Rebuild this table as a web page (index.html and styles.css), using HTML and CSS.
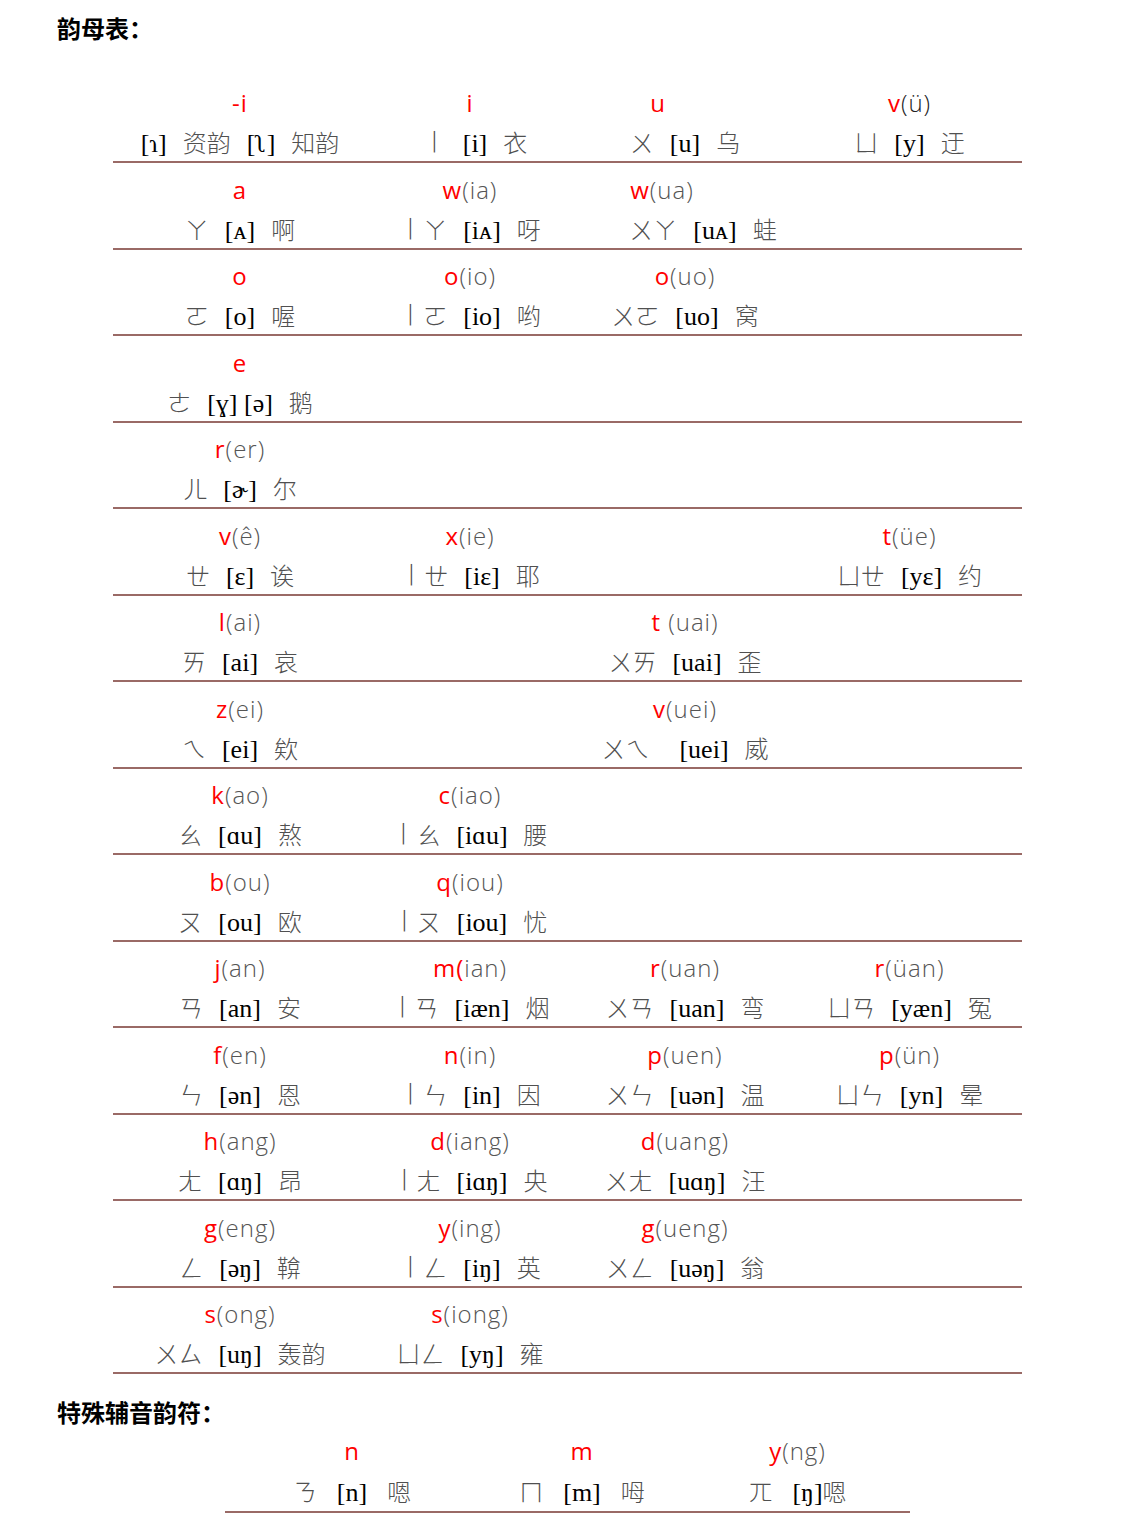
FILE: index.html
```html
<!DOCTYPE html>
<html lang="zh">
<head>
<meta charset="utf-8">
<title>韵母表</title>
<link rel="stylesheet" href="styles.css">
</head>
<body>
<div class="page">
  <h2 class="title">韵母表：</h2>

  <div class="table main">
    <div class="row">
      <div class="cell"><div class="py"><b>-i</b></div><div class="zy"><span class="ipa">[ɿ]</span><span class="hz">资韵</span><span class="ipa">[ʅ]</span><span class="hz">知韵</span></div></div>
      <div class="cell"><div class="py"><b>i</b></div><div class="zy sh-r"><span class="hz"><span class="yi">ㄧ</span></span><span class="ipa">[i]</span><span class="hz">衣</span></div></div>
      <div class="cell"><div class="py sh-u"><b>u</b></div><div class="zy"><span class="hz">ㄨ</span><span class="ipa">[u]</span><span class="hz">乌</span></div></div>
      <div class="cell"><div class="py"><b>v</b><span class="dk">(ü)</span></div><div class="zy"><span class="hz">ㄩ</span><span class="ipa">[y]</span><span class="hz">迂</span></div></div>
    </div>
    <div class="row">
      <div class="cell"><div class="py"><b>a</b></div><div class="zy"><span class="hz">ㄚ</span><span class="ipa">[ᴀ]</span><span class="hz">啊</span></div></div>
      <div class="cell"><div class="py"><b>w</b>(ia)</div><div class="zy"><span class="hz"><span class="yi">ㄧ</span>ㄚ</span><span class="ipa">[iᴀ]</span><span class="hz">呀</span></div></div>
      <div class="cell"><div class="py sh-ua"><b>w</b>(ua)</div><div class="zy sh-uaz"><span class="hz">ㄨㄚ</span><span class="ipa">[uᴀ]</span><span class="hz">蛙</span></div></div>
      <div class="cell"></div>
    </div>
    <div class="row">
      <div class="cell"><div class="py"><b>o</b></div><div class="zy"><span class="hz">ㄛ</span><span class="ipa">[o]</span><span class="hz">喔</span></div></div>
      <div class="cell"><div class="py"><b>o</b>(io)</div><div class="zy"><span class="hz"><span class="yi">ㄧ</span>ㄛ</span><span class="ipa">[io]</span><span class="hz">哟</span></div></div>
      <div class="cell"><div class="py"><b>o</b>(uo)</div><div class="zy"><span class="hz">ㄨㄛ</span><span class="ipa">[uo]</span><span class="hz">窝</span></div></div>
      <div class="cell"></div>
    </div>
    <div class="row">
      <div class="cell"><div class="py"><b>e</b></div><div class="zy"><span class="hz">ㄜ</span><span class="ipa">[ɣ] [ə]</span><span class="hz">鹅</span></div></div>
      <div class="cell"></div><div class="cell"></div><div class="cell"></div>
    </div>
    <div class="row">
      <div class="cell"><div class="py"><b>r</b>(er)</div><div class="zy"><span class="hz">ㄦ</span><span class="ipa">[ɚ]</span><span class="hz">尔</span></div></div>
      <div class="cell"></div><div class="cell"></div><div class="cell"></div>
    </div>
    <div class="row">
      <div class="cell"><div class="py"><b>v</b>(ê)</div><div class="zy"><span class="hz">ㄝ</span><span class="ipa">[ɛ]</span><span class="hz">诶</span></div></div>
      <div class="cell"><div class="py"><b>x</b>(ie)</div><div class="zy"><span class="hz"><span class="yi">ㄧ</span>ㄝ</span><span class="ipa">[iɛ]</span><span class="hz">耶</span></div></div>
      <div class="cell"></div>
      <div class="cell"><div class="py"><b>t</b>(üe)</div><div class="zy"><span class="hz">ㄩㄝ</span><span class="ipa">[yɛ]</span><span class="hz">约</span></div></div>
    </div>
    <div class="row">
      <div class="cell"><div class="py"><b>l</b>(ai)</div><div class="zy"><span class="hz">ㄞ</span><span class="ipa">[ai]</span><span class="hz">哀</span></div></div>
      <div class="cell"></div>
      <div class="cell"><div class="py"><b>t</b> (uai)</div><div class="zy"><span class="hz">ㄨㄞ</span><span class="ipa">[uai]</span><span class="hz">歪</span></div></div>
      <div class="cell"></div>
    </div>
    <div class="row">
      <div class="cell"><div class="py"><b>z</b>(ei)</div><div class="zy"><span class="hz">ㄟ</span><span class="ipa">[ei]</span><span class="hz">欸</span></div></div>
      <div class="cell"></div>
      <div class="cell"><div class="py"><b>v</b>(uei)</div><div class="zy"><span class="hz wide">ㄨㄟ</span><span class="ipa">[uei]</span><span class="hz">威</span></div></div>
      <div class="cell"></div>
    </div>
    <div class="row">
      <div class="cell"><div class="py"><b>k</b>(ao)</div><div class="zy"><span class="hz">ㄠ</span><span class="ipa">[ɑu]</span><span class="hz">熬</span></div></div>
      <div class="cell"><div class="py"><b>c</b>(iao)</div><div class="zy"><span class="hz"><span class="yi">ㄧ</span>ㄠ</span><span class="ipa">[iɑu]</span><span class="hz">腰</span></div></div>
      <div class="cell"></div><div class="cell"></div>
    </div>
    <div class="row">
      <div class="cell"><div class="py"><b>b</b>(ou)</div><div class="zy"><span class="hz">ㄡ</span><span class="ipa">[ou]</span><span class="hz">欧</span></div></div>
      <div class="cell"><div class="py"><b>q</b>(iou)</div><div class="zy"><span class="hz"><span class="yi">ㄧ</span>ㄡ</span><span class="ipa">[iou]</span><span class="hz">忧</span></div></div>
      <div class="cell"></div><div class="cell"></div>
    </div>
    <div class="row">
      <div class="cell"><div class="py"><b>j</b>(an)</div><div class="zy"><span class="hz">ㄢ</span><span class="ipa">[an]</span><span class="hz">安</span></div></div>
      <div class="cell"><div class="py"><b>m(</b>ian)</div><div class="zy"><span class="hz"><span class="yi">ㄧ</span>ㄢ</span><span class="ipa">[iæn]</span><span class="hz">烟</span></div></div>
      <div class="cell"><div class="py"><b>r</b>(uan)</div><div class="zy"><span class="hz">ㄨㄢ</span><span class="ipa">[uan]</span><span class="hz">弯</span></div></div>
      <div class="cell"><div class="py"><b>r</b>(üan)</div><div class="zy"><span class="hz">ㄩㄢ</span><span class="ipa">[yæn]</span><span class="hz">冤</span></div></div>
    </div>
    <div class="row">
      <div class="cell"><div class="py"><b>f</b>(en)</div><div class="zy"><span class="hz">ㄣ</span><span class="ipa">[ən]</span><span class="hz">恩</span></div></div>
      <div class="cell"><div class="py"><b>n</b>(in)</div><div class="zy"><span class="hz"><span class="yi">ㄧ</span>ㄣ</span><span class="ipa">[in]</span><span class="hz">因</span></div></div>
      <div class="cell"><div class="py"><b>p</b>(uen)</div><div class="zy"><span class="hz">ㄨㄣ</span><span class="ipa">[uən]</span><span class="hz">温</span></div></div>
      <div class="cell"><div class="py"><b>p</b>(ün)</div><div class="zy"><span class="hz">ㄩㄣ</span><span class="ipa">[yn]</span><span class="hz">晕</span></div></div>
    </div>
    <div class="row">
      <div class="cell"><div class="py"><b>h</b>(ang)</div><div class="zy"><span class="hz">ㄤ</span><span class="ipa">[ɑŋ]</span><span class="hz">昂</span></div></div>
      <div class="cell"><div class="py"><b>d</b>(iang)</div><div class="zy"><span class="hz"><span class="yi">ㄧ</span>ㄤ</span><span class="ipa">[iɑŋ]</span><span class="hz">央</span></div></div>
      <div class="cell"><div class="py"><b>d</b>(uang)</div><div class="zy"><span class="hz">ㄨㄤ</span><span class="ipa">[uɑŋ]</span><span class="hz">汪</span></div></div>
      <div class="cell"></div>
    </div>
    <div class="row">
      <div class="cell"><div class="py"><b>g</b>(eng)</div><div class="zy"><span class="hz">ㄥ</span><span class="ipa">[əŋ]</span><span class="hz">鞥</span></div></div>
      <div class="cell"><div class="py"><b>y</b>(ing)</div><div class="zy"><span class="hz"><span class="yi">ㄧ</span>ㄥ</span><span class="ipa">[iŋ]</span><span class="hz">英</span></div></div>
      <div class="cell"><div class="py"><b>g</b>(ueng)</div><div class="zy"><span class="hz">ㄨㄥ</span><span class="ipa">[uəŋ]</span><span class="hz">翁</span></div></div>
      <div class="cell"></div>
    </div>
    <div class="row">
      <div class="cell"><div class="py"><b>s</b>(ong)</div><div class="zy"><span class="hz">ㄨㄙ</span><span class="ipa">[uŋ]</span><span class="hz">轰韵</span></div></div>
      <div class="cell"><div class="py"><b>s</b>(iong)</div><div class="zy"><span class="hz">ㄩㄥ</span><span class="ipa">[yŋ]</span><span class="hz">雍</span></div></div>
      <div class="cell"></div><div class="cell"></div>
    </div>
  </div>

  <h2 class="title title2">特殊辅音韵符：</h2>

  <div class="table special">
    <div class="row">
      <div class="cell"><div class="py"><b>n</b></div><div class="zy"><span class="hz">ㄋ</span><span class="ipa">[n]</span><span class="hz">嗯</span></div></div>
      <div class="cell"><div class="py"><b>m</b></div><div class="zy"><span class="hz">ㄇ</span><span class="ipa">[m]</span><span class="hz">呣</span></div></div>
      <div class="cell"><div class="py"><b>y</b>(ng)</div><div class="zy"><span class="hz">ㄫ</span><span class="ipa tight">[ŋ]</span><span class="hz">嗯</span></div></div>
    </div>
  </div>
</div>
</body>
</html>
```

FILE: styles.css
```css
html, body {
  margin: 0;
  padding: 0;
  background: #ffffff;
}

.page {
  width: 1122px;
  padding-top: 12px;
  padding-bottom: 10px;
}

.title {
  margin: 0 0 0 57px;
  font-family: "Noto Sans CJK SC", sans-serif;
  font-weight: 700;
  font-size: 24px;
  line-height: 32px;
  color: #000;
}

.title2 {
  margin-top: 22px;
}

.table {
  display: flex;
  flex-direction: column;
}

.main {
  width: 909px;
  margin: 32.5px 0 0 113px;
}

.row {
  display: grid;
  border-bottom: 2px solid #9a6a66;
}

.main .row {
  grid-template-columns: 254px 206px 224px 225px;
  padding-top: 6.5px;
}

.cell {
  text-align: center;
  min-width: 0;
}

.py {
  font-family: "Open Sans", "DejaVu Sans", sans-serif;
  font-weight: 300;
  font-size: 24px;
  letter-spacing: 1px;
  line-height: 40px;
  height: 40px;
  color: #555555;
  white-space: pre;
}

.py b {
  font-weight: 400;
  color: #ff0000;
}

.py .dk {
  color: #222;
}

.zy {
  display: flex;
  justify-content: center;
  align-items: baseline;
  gap: 16px;
  height: 38px;
  line-height: 38px;
  white-space: pre;
}

.hz {
  font-family: "Noto Sans CJK SC", sans-serif;
  font-weight: 300;
  font-size: 24px;
  color: #505050;
}

.yi {
  display: inline-block;
  transform: rotate(90deg) scaleX(1.2);
}

.hz.wide {
  margin-right: 14px;
}

.ipa {
  font-family: "Liberation Serif", "DejaVu Serif", serif;
  font-size: 26px;
  color: #000;
}

.sh-r {
  padding-left: 10px;
}

.sh-u {
  padding-right: 54px;
}

.sh-ua {
  padding-right: 46px;
}

.sh-uaz {
  padding-left: 36px;
}

.special {
  width: 685px;
  margin: 0 0 0 225px;
}

.special .row {
  grid-template-columns: 254px 206px 225px;
  padding-top: 3px;
}

.special .zy {
  gap: 20px;
  height: 40px;
  line-height: 40px;
}

.ipa.tight {
  margin-right: -20px;
}
```
